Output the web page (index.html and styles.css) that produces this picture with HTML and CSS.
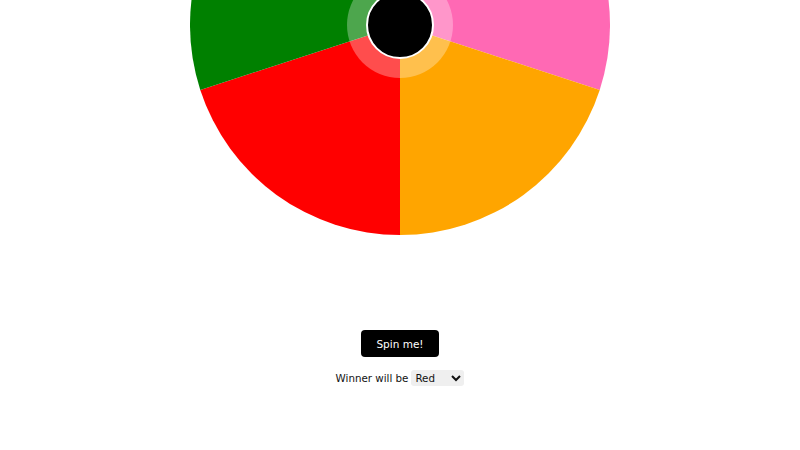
FILE: index.html
```html
<!DOCTYPE html>
<html>
<head>
<meta charset="utf-8">
<link rel="stylesheet" href="styles.css">
</head>
<body>
<div class="page">
  <div class="wheel-area">
    <svg class="wheel" width="420" height="235" viewBox="-210 -25 420 235">
      <path d="M0 0 L-123.44 -169.89 A210 210 0 0 1 123.44 -169.89 Z" fill="#1e90ff"/>
      <path d="M0 0 L123.44 -169.89 A210 210 0 0 1 199.73 64.89 Z" fill="#ff69b4"/>
      <path d="M0 0 L199.73 64.89 A210 210 0 0 1 0 210 Z" fill="#ffa500"/>
      <path d="M0 0 L0 210 A210 210 0 0 1 -199.73 64.89 Z" fill="#ff0000"/>
      <path d="M0 0 L-199.73 64.89 A210 210 0 0 1 -123.44 -169.89 Z" fill="#008000"/>
      <circle cx="0" cy="0" r="53" fill="#ffffff" fill-opacity="0.3"/>
      <circle cx="0" cy="0" r="33" fill="#000000" stroke="#ffffff" stroke-width="2"/>
    </svg>
  </div>
  <button class="spin">Spin me!</button>
  <div class="winner">
    <span>Winner will be</span>
    <select class="pick">
      <option>Red</option>
      <option>Green</option>
      <option>Blue</option>
      <option>Pink</option>
      <option>Orange</option>
    </select>
  </div>
</div>
</body>
</html>
```
FILE: styles.css
```css
html, body {
  margin: 0;
  padding: 0;
  background: #ffffff;
}
.page {
  width: 800px;
  height: 450px;
  display: flex;
  flex-direction: column;
  align-items: center;
  font-family: "DejaVu Sans", sans-serif;
  color: #111;
}
.wheel-area {
  height: 330px;
  display: flex;
  justify-content: center;
}
.wheel {
  display: block;
}
.spin {
  background: #000;
  color: #fff;
  border: none;
  border-radius: 4px;
  font-family: "DejaVu Sans", sans-serif;
  font-size: 10.5px;
  width: 78px;
  height: 27px;
  padding: 0;
  cursor: pointer;
}
.winner {
  margin-top: 13px;
  display: flex;
  align-items: center;
  gap: 3px;
  font-size: 10.3px;
}
.pick {
  font-family: "DejaVu Sans", sans-serif;
  font-size: 10.3px;
  color: #111;
  width: 53px;
  height: 16px;
  padding: 0;
  background-color: #efefef;
  border: none;
  border-radius: 3px;
}
```
